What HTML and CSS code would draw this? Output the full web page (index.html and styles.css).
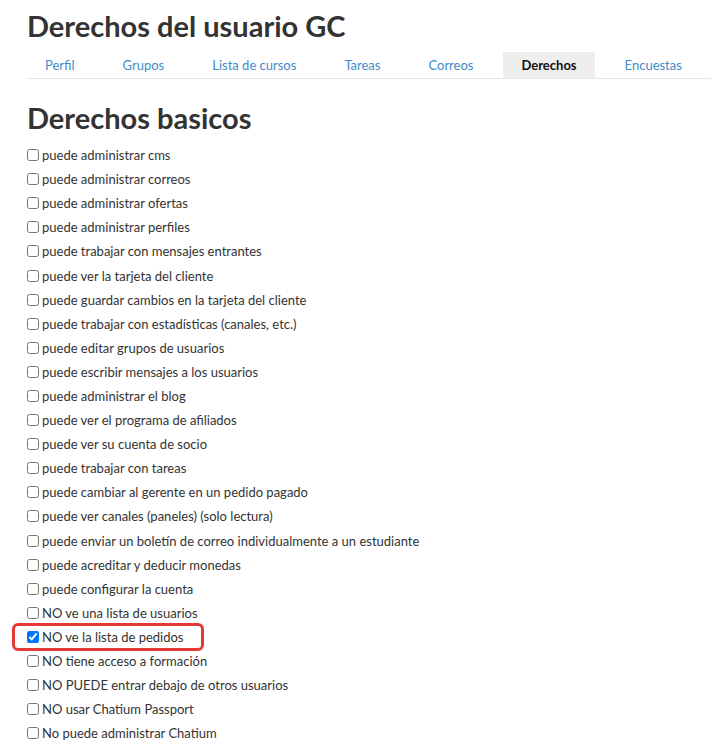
FILE: index.html
```html
<!DOCTYPE html>
<html lang="es">
<head>
    <meta charset="UTF-8">
    <meta name="viewport" content="width=device-width, initial-scale=1.0">
    <title>Derechos del usuario GC</title>
    <link rel="stylesheet" href="styles.css">
</head>
<body>
    <div class="page">
        <h1>Derechos del usuario GC</h1>
        <ul class="tabs">
            <li><a href="#">Perfil</a></li>
            <li><a href="#">Grupos</a></li>
            <li><a href="#">Lista de cursos</a></li>
            <li><a href="#">Tareas</a></li>
            <li><a href="#">Correos</a></li>
            <li class="active"><a href="#">Derechos</a></li>
            <li><a href="#">Encuestas</a></li>
        </ul>

        <h2>Derechos basicos</h2>
        <div class="rights">
            <label class="right"><input type="checkbox"> puede administrar cms</label>
            <label class="right"><input type="checkbox"> puede administrar correos</label>
            <label class="right"><input type="checkbox"> puede administrar ofertas</label>
            <label class="right"><input type="checkbox"> puede administrar perfiles</label>
            <label class="right"><input type="checkbox"> puede trabajar con mensajes entrantes</label>
            <label class="right"><input type="checkbox"> puede ver la tarjeta del cliente</label>
            <label class="right"><input type="checkbox"> puede guardar cambios en la tarjeta del cliente</label>
            <label class="right"><input type="checkbox"> puede trabajar con estadísticas (canales, etc.)</label>
            <label class="right"><input type="checkbox"> puede editar grupos de usuarios</label>
            <label class="right"><input type="checkbox"> puede escribir mensajes a los usuarios</label>
            <label class="right"><input type="checkbox"> puede administrar el blog</label>
            <label class="right"><input type="checkbox"> puede ver el programa de afiliados</label>
            <label class="right"><input type="checkbox"> puede ver su cuenta de socio</label>
            <label class="right"><input type="checkbox"> puede trabajar con tareas</label>
            <label class="right"><input type="checkbox"> puede cambiar al gerente en un pedido pagado</label>
            <label class="right"><input type="checkbox"> puede ver canales (paneles) (solo lectura)</label>
            <label class="right"><input type="checkbox"> puede enviar un boletín de correo individualmente a un estudiante</label>
            <label class="right"><input type="checkbox"> puede acreditar y deducir monedas</label>
            <label class="right"><input type="checkbox"> puede configurar la cuenta</label>
            <label class="right"><input type="checkbox"> NO ve una lista de usuarios</label>
            <label class="right marked"><input type="checkbox" checked> NO ve la lista de pedidos</label>
            <label class="right"><input type="checkbox"> NO tiene acceso a formación</label>
            <label class="right"><input type="checkbox"> NO PUEDE entrar debajo de otros usuarios</label>
            <label class="right"><input type="checkbox"> NO usar Chatium Passport</label>
            <label class="right"><input type="checkbox"> No puede administrar Chatium</label>
        </div>
    </div>
</body>
</html>
```

FILE: styles.css
```css
body {
    margin: 0;
    font-family: 'Lato', 'Open Sans', sans-serif;
    color: #333;
    background: #fff;
    overflow: hidden;
}
.page {
    padding: 0 0 0 27px;
}
h1 {
    margin: 0;
    padding-top: 9px;
    font-size: 29px;
    font-weight: 700;
    line-height: 34px;
    color: #333;
}
.tabs {
    display: flex;
    list-style: none;
    margin: 9px 0 0;
    padding: 0;
    border-bottom: 1px solid #e6e6e6;
}
.tabs li {
    flex-shrink: 0;
    margin-right: 12px;
    white-space: nowrap;
}
.tabs a {
    display: block;
    padding: 0 18px;
    height: 26px;
    line-height: 26px;
    font-size: 13px;
    color: #428bca;
    text-decoration: none;
}
.tabs li.active a {
    background: #eee;
    color: #111;
    font-weight: 700;
}
h2 {
    margin: 19px 0 0;
    font-size: 29px;
    line-height: 40px;
    font-weight: 700;
}
.rights {
    margin-top: 5px;
}
.right {
    display: flex;
    align-items: center;
    width: max-content;
    height: 24.1px;
    font-size: 13px;
    color: #333;
    position: relative;
}
.right input {
    width: 12px;
    height: 12px;
    margin: 0 3px 0 0;
}
.right.marked::before {
    content: "";
    position: absolute;
    left: -15px;
    right: -20px;
    top: -2px;
    bottom: -2px;
    border: 3px solid #e53935;
    border-radius: 6px;
}
```
